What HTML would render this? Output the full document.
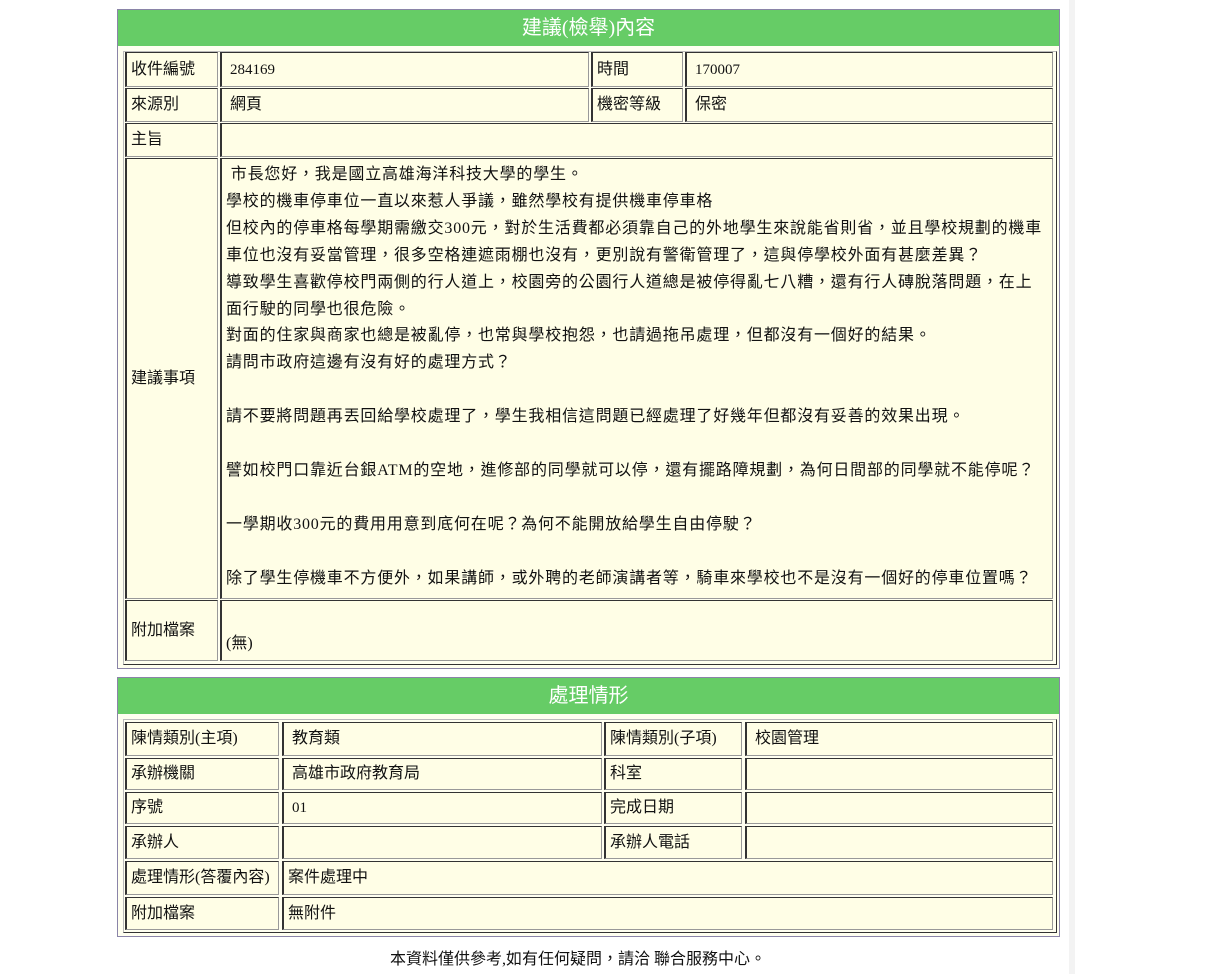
<!DOCTYPE html>
<html><head><meta charset="utf-8"><style>
body{margin:0;width:1216px;height:974px;background:#fff;position:relative;overflow:hidden;font-family:"Liberation Serif","Noto Sans CJK TC",serif;font-size:16px;color:#111}
.box{position:absolute;left:117px;width:943px;border:1px solid #8a84a8;background:#fffff0;box-sizing:border-box}
.hd{position:absolute;left:0;right:0;top:0;height:36px;background:#66cc66;color:#fff;text-align:center;font-size:20px;line-height:36px}
.c{position:absolute;box-sizing:border-box;border-left:2px solid #333;border-top:1px solid #333;border-right:1px solid #999;border-bottom:1px solid #999;background:#fffee6;padding-left:4px;white-space:nowrap;display:flex;align-items:center;line-height:20px}
.c>span{display:block;line-height:20px;height:20px}
.txt{line-height:26.9px;letter-spacing:0.8px;align-items:flex-start;padding-top:2px}
.bar{position:absolute;left:1069px;top:0;width:6px;height:974px;background:#f3f3f3}
.tb{position:absolute;border-top:1px solid #bbb;border-left:1px solid #bbb;border-right:1px solid #333;border-bottom:1px solid #333;box-sizing:border-box}
.n{font-size:15px}
</style></head><body>
<div class="bar"></div>
<div class="box" style="top:9px;height:660px">
 <div class="hd">建議(檢舉)內容</div>
 <div class="tb" style="left:5px;top:41px;width:934px;height:614px"></div>
</div>
<div class="c" style="left:125px;top:52px;width:93px;height:35px"><span>收件編號</span></div>
<div class="c" style="left:220px;top:52px;width:369px;height:35px;padding-left:8px"><span class="n">284169</span></div>
<div class="c" style="left:591px;top:52px;width:92px;height:35px"><span>時間</span></div>
<div class="c" style="left:685px;top:52px;width:368px;height:35px;padding-left:8px"><span class="n">170007</span></div>
<div class="c" style="left:125px;top:88px;width:93px;height:34px"><span>來源別</span></div>
<div class="c" style="left:220px;top:88px;width:369px;height:34px;padding-left:8px"><span>網頁</span></div>
<div class="c" style="left:591px;top:88px;width:92px;height:34px"><span>機密等級</span></div>
<div class="c" style="left:685px;top:88px;width:368px;height:34px;padding-left:8px"><span>保密</span></div>
<div class="c" style="left:125px;top:123px;width:93px;height:34px"><span>主旨</span></div>
<div class="c" style="left:220px;top:123px;width:833px;height:34px"></div>
<div class="c" style="left:125px;top:158px;width:93px;height:441px"><span>建議事項</span></div>
<div class="c txt" style="left:220px;top:158px;width:833px;height:441px;line-height:26.9px"><div style="margin-top:1px">&nbsp;市長您好，我是國立高雄海洋科技大學的學生。<br>學校的機車停車位一直以來惹人爭議，雖然學校有提供機車停車格<br>但校內的停車格每學期需繳交300元，對於生活費都必須靠自己的外地學生來說能省則省，並且學校規劃的機車<br>車位也沒有妥當管理，很多空格連遮雨棚也沒有，更別說有警衛管理了，這與停學校外面有甚麼差異？<br>導致學生喜歡停校門兩側的行人道上，校園旁的公園行人道總是被停得亂七八糟，還有行人磚脫落問題，在上<br>面行駛的同學也很危險。<br>對面的住家與商家也總是被亂停，也常與學校抱怨，也請過拖吊處理，但都沒有一個好的結果。<br>請問市政府這邊有沒有好的處理方式？<br><br>請不要將問題再丟回給學校處理了，學生我相信這問題已經處理了好幾年但都沒有妥善的效果出現。<br><br>譬如校門口靠近台銀ATM的空地，進修部的同學就可以停，還有擺路障規劃，為何日間部的同學就不能停呢？<br><br>一學期收300元的費用用意到底何在呢？為何不能開放給學生自由停駛？<br><br>除了學生停機車不方便外，如果講師，或外聘的老師演講者等，騎車來學校也不是沒有一個好的停車位置嗎？</div></div>
<div class="c" style="left:125px;top:600px;width:93px;height:61px"><span>附加檔案</span></div>
<div class="c" style="left:220px;top:600px;width:833px;height:61px;align-items:flex-end;padding-bottom:6px"><span>(無)</span></div>

<div class="box" style="top:677px;height:260px">
 <div class="hd">處理情形</div>
 <div class="tb" style="left:5px;top:41px;width:934px;height:214px"></div>
</div>
<div class="c" style="left:125px;top:722px;width:154px;height:34px"><span>陳情類別(主項)</span></div>
<div class="c" style="left:282px;top:722px;width:320px;height:34px;padding-left:8px"><span>教育類</span></div>
<div class="c" style="left:604px;top:722px;width:138px;height:34px"><span>陳情類別(子項)</span></div>
<div class="c" style="left:745px;top:722px;width:308px;height:34px;padding-left:8px"><span>校園管理</span></div>
<div class="c" style="left:125px;top:758px;width:154px;height:32px"><span>承辦機關</span></div>
<div class="c" style="left:282px;top:758px;width:320px;height:32px;padding-left:8px"><span>高雄市政府教育局</span></div>
<div class="c" style="left:604px;top:758px;width:138px;height:32px"><span>科室</span></div>
<div class="c" style="left:745px;top:758px;width:308px;height:32px"></div>
<div class="c" style="left:125px;top:792px;width:154px;height:32px"><span>序號</span></div>
<div class="c" style="left:282px;top:792px;width:320px;height:32px;padding-left:8px"><span class="n">01</span></div>
<div class="c" style="left:604px;top:792px;width:138px;height:32px"><span>完成日期</span></div>
<div class="c" style="left:745px;top:792px;width:308px;height:32px"></div>
<div class="c" style="left:125px;top:826px;width:154px;height:33px"><span>承辦人</span></div>
<div class="c" style="left:282px;top:826px;width:320px;height:33px"></div>
<div class="c" style="left:604px;top:826px;width:138px;height:33px"><span>承辦人電話</span></div>
<div class="c" style="left:745px;top:826px;width:308px;height:33px"></div>
<div class="c" style="left:125px;top:861px;width:154px;height:34px"><span>處理情形(答覆內容)</span></div>
<div class="c" style="left:282px;top:861px;width:771px;height:34px"><span>案件處理中</span></div>
<div class="c" style="left:125px;top:897px;width:154px;height:33px"><span>附加檔案</span></div>
<div class="c" style="left:282px;top:897px;width:771px;height:33px"><span>無附件</span></div>

<div style="position:absolute;left:390px;top:948px;width:400px;font-size:16px;line-height:24px;white-space:nowrap">本資料僅供參考,如有任何疑問，請洽 聯合服務中心。</div>
</body></html>
